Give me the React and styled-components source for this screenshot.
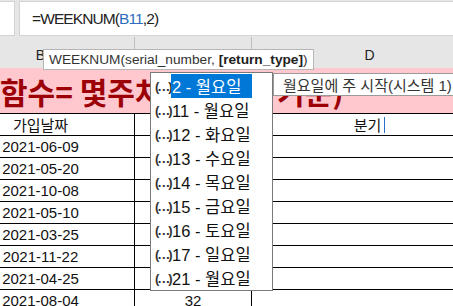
import React from "react";
import styled, { createGlobalStyle } from "styled-components";

const FONT = `"Liberation Sans", "Noto Sans CJK KR", sans-serif`;

const Global = createGlobalStyle`
  body { margin: 0; overflow: hidden; background: #fff; font-family: ${FONT}; }
`;

const S = {
    Page: styled.div`
        position: relative;
        width: 453px;
        height: 306px;
        overflow: hidden;
        background: #fff;
    `,
    FormulaBar: styled.div`
        height: 37px;
        background: #e6e6e6;
        display: flex;
        gap: 4px;
        padding-top: 1px;
        box-sizing: border-box;
    `,
    NameBox: styled.div`
        width: 15px;
        height: 35px;
        background: #fff;
        border: 1px solid #d4d4d4;
        border-left: none;
        box-sizing: border-box;
    `,
    FormulaBox: styled.div`
        flex: 1;
        height: 35px;
        background: #fff;
        border: 1px solid #d4d4d4;
        border-right: none;
        box-sizing: border-box;
        padding-left: 12px;
        display: flex;
        align-items: center;
        font-size: 15.5px;
        letter-spacing: -0.9px;
        color: #222;
        & b { font-weight: normal; color: #2f6ebf; }
    `,
    Grid: styled.div`
        display: grid;
        grid-template-columns: 188px 117px 236px;
        margin-left: -53px;
    `,
    ColHead: styled.div`
        height: 31px;
        background: #e6e6e6;
        border-right: 1px solid ${p => p.line ? "#bdbdbd" : "transparent"};
        display: flex;
        justify-content: center;
        padding-top: 10px;
        box-sizing: border-box;
        font-size: 14px;
        color: #222;
    `,
    Title: styled.div`
        height: 45px;
        background: #ffc7ce;
        color: #9c0006;
        font-family: "Noto Sans CJK KR", sans-serif;
        font-weight: bold;
        font-size: 30px;
        line-height: 1;
        white-space: nowrap;
        display: flex;
        align-items: center;
        box-sizing: border-box;
    `,
    Cell: styled.div`
        height: 22px;
        border-top: 1px solid #000;
        border-right: 1px solid #000;
        box-sizing: border-box;
        display: flex;
        align-items: center;
        justify-content: center;
        font-size: 15px;
        color: #111;
    `,
    Caret: styled.span`
        display: inline-block;
        width: 1px;
        height: 16px;
        margin-left: 3px;
        background: #2a6fc9;
    `,
    Tip: styled.div`
        position: absolute;
        left: 43px;
        top: 49px;
        height: 21px;
        padding: 0 5px;
        background: #fff;
        border: 1px solid #b5b5b5;
        box-sizing: border-box;
        display: flex;
        align-items: center;
        font-size: 13.7px;
        color: #333;
        white-space: nowrap;
        & b { color: #222; }
    `,
    Hint: styled.div`
        position: absolute;
        left: 273px;
        top: 73px;
        width: 200px;
        height: 23px;
        padding-left: 9px;
        background: #fff;
        border: 1px solid #9a9a9a;
        box-sizing: border-box;
        display: flex;
        align-items: center;
        font-size: 15px;
        color: #333;
        white-space: nowrap;
    `,
    List: styled.div`
        position: absolute;
        left: 150px;
        top: 72px;
        width: 123px;
        height: 219px;
        background: #fff;
        border: 1px solid #7a7a7a;
        box-sizing: border-box;
        padding-top: 1px;
        display: flex;
        flex-direction: column;
    `,
    Item: styled.div`
        height: 24px;
        display: flex;
        align-items: center;
        padding-left: 4px;
        font-size: 16.5px;
        white-space: nowrap;
    `,
    Icon: styled.span`
        width: 16px;
        font-size: 13px;
        font-weight: bold;
        color: #333;
        letter-spacing: -2px;
    `,
    Label: styled.span`
        height: 24px;
        display: flex;
        align-items: center;
        padding: 0 0 0 1px;
        width: 81px;
        box-sizing: border-box;
        background: ${p => p.active ? "#0078d7" : "transparent"};
        color: ${p => p.active ? "#fff" : "#111"};
    `
};

const dates = ["2021-06-09", "2021-05-20", "2021-10-08", "2021-05-10", "2021-03-25",
    "2021-11-22", "2021-04-25", "2021-08-04"];

const options = ["2 - 월요일", "11 - 월요일", "12 - 화요일", "13 - 수요일", "14 - 목요일",
    "15 - 금요일", "16 - 토요일", "17 - 일요일", "21 - 월요일"];

function App() {
    return (
        <S.Page>
            <Global />
            <S.FormulaBar>
                <S.NameBox />
                <S.FormulaBox>=WEEKNUM(<b>B11</b>,2)</S.FormulaBox>
            </S.FormulaBar>

            <S.Grid>
                <S.ColHead line>B</S.ColHead>
                <S.ColHead line>C</S.ColHead>
                <S.ColHead>D</S.ColHead>
            </S.Grid>

            <S.Title>함수= 몇주차 번호 (년 기준)</S.Title>

            <S.Grid>
                <S.Cell>가입날짜</S.Cell>
                <S.Cell />
                <S.Cell>분기<S.Caret /></S.Cell>
                {dates.map((d, i) => (
                    <React.Fragment key={i}>
                        <S.Cell>{d}</S.Cell>
                        <S.Cell>{i === dates.length - 1 ? "32" : ""}</S.Cell>
                        <S.Cell />
                    </React.Fragment>
                ))}
            </S.Grid>

            <S.Tip>WEEKNUM(serial_number,&nbsp;<b>[return_type]</b>)</S.Tip>

            <S.List>
                {options.map((o, i) => (
                    <S.Item key={i}>
                        <S.Icon>(…)</S.Icon>
                        <S.Label active={i === 0}>{o}</S.Label>
                    </S.Item>
                ))}
            </S.List>

            <S.Hint>월요일에 주 시작(시스템 1)</S.Hint>
        </S.Page>
    );
}

export default App;
